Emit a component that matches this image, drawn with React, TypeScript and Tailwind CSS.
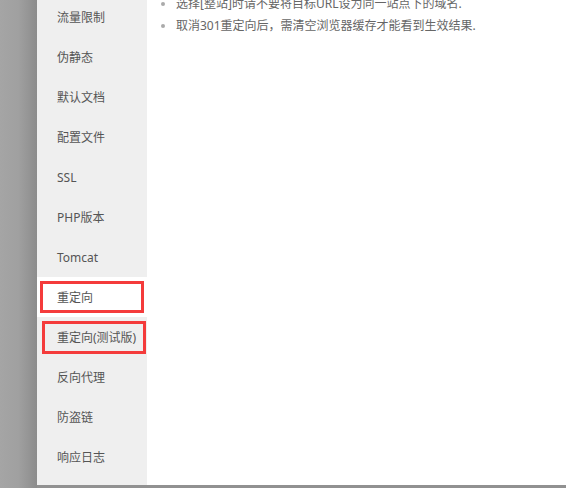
import React from 'react'

const items = [
    '流量限制',
    '伪静态',
    '默认文档',
    '配置文件',
    'SSL',
    'PHP版本',
    'Tomcat',
    '重定向',
    '重定向(测试版)',
    '反向代理',
    '防盗链',
    '响应日志',
]

const tips = [
    '选择[整站]时请不要将目标URL设为同一站点下的域名.',
    '取消301重定向后，需清空浏览器缓存才能看到生效结果.',
]

export default function App() {
    return (
        <div className="w-[566px] h-[488px] overflow-hidden bg-[#919191] flex font-['Noto_Sans','Noto_Sans_CJK_SC',sans-serif]">
            {/* 遮罩 + 阴影 */}
            <div className="w-[37px] h-full shrink-0 bg-gradient-to-r from-[#a5a5a5] via-[#a0a0a0] to-[#8c8c8c]" />

            {/* 弹窗 */}
            <div className="flex-1 h-[485px] flex bg-white">
                {/* 左侧菜单 */}
                <div className="relative w-[110px] shrink-0 bg-[#efefef]">
                    <ul className="-mt-[3px]">
                        {items.map((item, i) => (
                            <li
                                key={item}
                                className={
                                    'h-10 flex items-center pl-5 pt-[2px] text-[12px] text-[#555] ' +
                                    (i === 7 ? 'bg-white' : '')
                                }
                            >
                                {item}
                            </li>
                        ))}
                    </ul>

                    {/* 标注框 */}
                    <div className="absolute left-[3px] top-[281px] w-[104px] h-[32px] border-[3px] border-[#f43b3b]" />
                    <div className="absolute left-[5px] top-[321px] w-[104px] h-[33px] border-[3px] border-[#f43b3b]" />
                </div>

                {/* 内容区 */}
                <div className="flex-1 pl-[14px]">
                    <ul className="-mt-[7px]">
                        {tips.map((t) => (
                            <li key={t} className="flex items-center h-[22px] text-[12px] text-[#666]">
                                <span className="w-[4px] h-[4px] rounded-full bg-[#aaa] mr-[11px] shrink-0" />
                                <span className="whitespace-nowrap">{t}</span>
                            </li>
                        ))}
                    </ul>
                </div>
            </div>
        </div>
    )
}
